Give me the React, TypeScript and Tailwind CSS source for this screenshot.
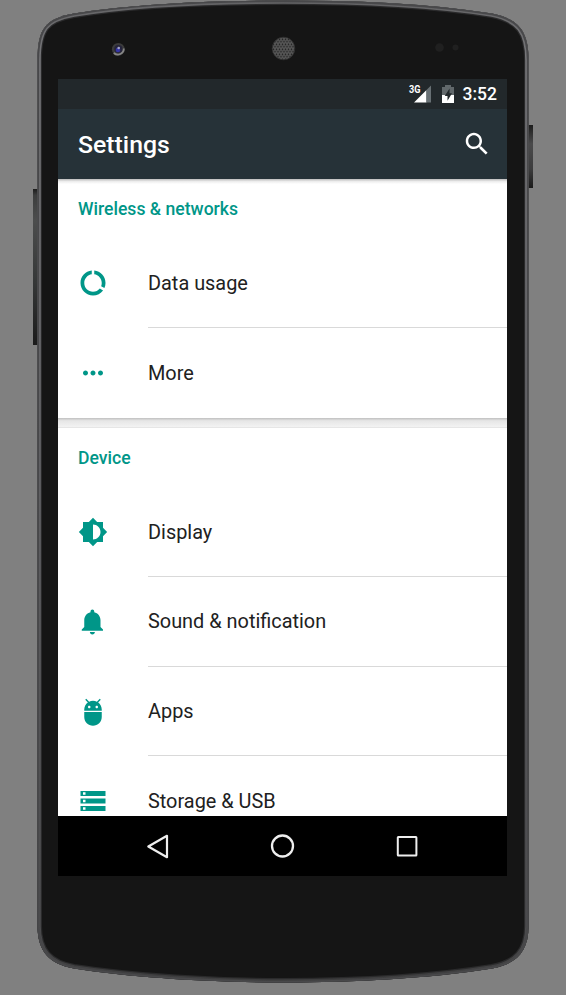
import React from "react";

const BODY =
  "M37.5 60 C37.5 28 46 18.5 74 13.5 C135 3.5 215 0.5 283 0.5 C352 0.5 425 3 492 13.5 C519 19 528.5 32 528.5 60 V926 C528.5 952 516 964 492 968.5 C430 978.5 352 982.5 283 982.5 C215 982.5 135 978 74 968.5 C49 964 37.5 951 37.5 926 Z";

const paths = {
  data: "M13 2.05v3.03c3.39.49 6 3.39 6 6.92 0 .9-.18 1.75-.48 2.54l2.6 1.53c.56-1.24.88-2.62.88-4.07 0-5.18-3.95-9.45-9-9.95zM12 19c-3.87 0-7-3.13-7-7 0-3.53 2.61-6.43 6-6.92V2.05c-5.06.5-9 4.76-9 9.95 0 5.52 4.47 10 9.99 10 3.31 0 6.24-1.61 8.06-4.09l-2.6-1.53C16.17 17.98 14.21 19 12 19z",
  more: "M6 10c-1.1 0-2 .9-2 2s.9 2 2 2 2-.9 2-2-.9-2-2-2zm12 0c-1.1 0-2 .9-2 2s.9 2 2 2 2-.9 2-2-.9-2-2-2zm-6 0c-1.1 0-2 .9-2 2s.9 2 2 2 2-.9 2-2-.9-2-2-2z",
  display: "M20 15.31L23.31 12 20 8.69V4h-4.69L12 .69 8.69 4H4v4.69L.69 12 4 15.31V20h4.69L12 23.31 15.31 20H20v-4.69zM12 18V6c3.31 0 6 2.69 6 6s-2.69 6-6 6z",
  sound: "M11.5 22c1.1 0 2-.9 2-2h-4c0 1.1.9 2 2 2zm6.5-6v-5.5c0-3.07-2.13-5.64-5-6.32V3.5c0-.83-.67-1.5-1.5-1.5S10 2.67 10 3.5v.68c-2.87.68-5 3.25-5 6.32V16l-2 2v1h17v-1l-2-2z",
  apps: "M5 16c0 3.87 3.13 7 7 7s7-3.13 7-7v-4H5v4zM16.12 4.37l2.1-2.1-.82-.83-2.3 2.31C14.16 3.28 13.12 3 12 3s-2.16.28-3.09.75L6.6 1.44l-.82.83 2.1 2.1C6.14 5.64 5 7.68 5 10v1h14v-1c0-2.32-1.14-4.36-2.88-5.63zM9 9c-.55 0-1-.45-1-1s.45-1 1-1 1 .45 1 1-.45 1-1 1zm6 0c-.55 0-1-.45-1-1s.45-1 1-1 1 .45 1 1-.45 1-1 1z",
  storage: "M2 20h20v-4H2v4zm2-3h2v2H4v-2zM2 4v4h20V4H2zm4 3H4V5h2v2zm-4 7h20v-4H2v4zm2-3h2v2H4v-2z",
  search: "M15.5 14h-.79l-.28-.27C15.41 12.59 16 11.11 16 9.5 16 5.91 13.09 3 9.5 3S3 5.91 3 9.5 5.91 16 9.5 16c1.61 0 3.09-.59 4.23-1.57l.27.28v.79l5 4.99L20.49 19l-4.99-5zm-6 0C7.01 14 5 11.99 5 9.5S7.01 5 9.5 5 14 7.01 14 9.5 11.99 14 9.5 14z",
};

function Icon({ name }: { name: keyof typeof paths }) {
  return (
    <svg viewBox="0 0 24 24" className="size-[30px] shrink-0 fill-current">
      <path d={paths[name]} />
    </svg>
  );
}

function Frame() {
  return (
    <svg viewBox="0 0 566 995" className="absolute inset-0 h-[995px] w-[566px]">
      <defs>
        <clipPath id="body">
          <path d={BODY} />
        </clipPath>
        <linearGradient id="keyLeft" x1="0" x2="0" y1="0" y2="1">
          <stop offset="0" stopColor="#1c1c1c" />
          <stop offset="0.04" stopColor="#3c3d3d" />
          <stop offset="0.2" stopColor="#4c4d4d" />
          <stop offset="0.6" stopColor="#353737" />
          <stop offset="1" stopColor="#1b1b1b" />
        </linearGradient>
        <linearGradient id="keyRight" x1="0" x2="0" y1="0" y2="1">
          <stop offset="0" stopColor="#1c1c1c" />
          <stop offset="0.3" stopColor="#4a4a4b" />
          <stop offset="0.7" stopColor="#3c3c3d" />
          <stop offset="1" stopColor="#1a1a1a" />
        </linearGradient>
        <linearGradient id="rim" x1="0" x2="0" y1="0" y2="1">
          <stop offset="0" stopColor="#626264" />
          <stop offset="0.06" stopColor="#77777a" />
          <stop offset="0.5" stopColor="#66666a" />
          <stop offset="0.94" stopColor="#4c4c4e" />
          <stop offset="1" stopColor="#3c3c3d" />
        </linearGradient>
        <pattern id="mesh" width="3" height="5" patternUnits="userSpaceOnUse" x="0.5" y="0.5">
          <rect width="3" height="5" fill="#808080" />
          <rect x="0.4" y="0.3" width="2.2" height="1.9" rx="0.6" fill="#151515" />
          <rect x="-1.1" y="2.8" width="2.2" height="1.9" rx="0.6" fill="#151515" />
          <rect x="1.9" y="2.8" width="2.2" height="1.9" rx="0.6" fill="#151515" />
        </pattern>
      </defs>
      <rect x="33" y="189" width="6" height="156" fill="url(#keyLeft)" />
      <rect x="527" y="125" width="6" height="63" fill="url(#keyRight)" />
      <path d={BODY} fill="#151515" />
      <g clipPath="url(#body)" fill="none">
        <path d={BODY} stroke="#2a2a2b" strokeWidth="9" />
        <path d={BODY} stroke="url(#rim)" strokeWidth="6.6" />
        <path d={BODY} stroke="#48484a" strokeWidth="3.4" />
      </g>
      <circle cx="118.3" cy="49.3" r="6.4" fill="#3c3c3c" />
      <path d="M113.8 53a6 6 0 0 0 10-4.5" fill="none" stroke="#858585" strokeWidth="1.8" />
      <circle cx="118.3" cy="49" r="4.1" fill="#25243b" />
      <circle cx="118" cy="50" r="2.3" fill="#3434a5" />
      <circle cx="118.7" cy="48" r="1.3" fill="#a5a5c8" />
      <circle cx="283.5" cy="48.5" r="11.3" fill="url(#mesh)" stroke="#303030" strokeWidth="0.8" />
      <circle cx="439.5" cy="47.5" r="4.3" fill="#202020" />
      <circle cx="455.5" cy="47.5" r="3" fill="#202020" />
    </svg>
  );
}

function Row({ icon, label, divider }: { icon: keyof typeof paths; label: string; divider?: boolean }) {
  return (
    <div className="flex h-[89.6px] shrink-0 items-stretch pl-5">
      <div className="flex w-[70px] items-center text-[#009688]">
        <Icon name={icon} />
      </div>
      <div className={divider ? "flex flex-1 items-center border-b border-[#d9d9d9]" : "flex flex-1 items-center"}>
        <span className="pt-[2px] text-[19.9px] leading-6 text-[#212121]">{label}</span>
      </div>
    </div>
  );
}

function Category({ label }: { label: string }) {
  return (
    <h2 className="flex h-[59.7px] shrink-0 items-center pt-px pl-5 text-[17.6px] font-medium text-[#009688]">{label}</h2>
  );
}

export default function App() {
  return (
    <div className="relative h-[995px] w-[566px] overflow-hidden bg-[#808080] pt-[79px] pl-[58px] font-[Roboto,sans-serif]">
      <Frame />
      <div className="relative flex h-[797px] w-[449px] flex-col overflow-hidden bg-white">
        <div className="flex h-[30px] shrink-0 items-center justify-end bg-[#22282b] pr-[10px] text-white">
          <svg viewBox="0 0 48 30" className="h-[30px] w-12">
            <path d="M24 23.5 L36.5 11 V23.5Z" fill="#fff" />
            <path d="M36.5 11 L41 6.5 V23.5 H36.5Z" fill="#687074" />
            <text x="19" y="14" textLength="11.5" lengthAdjust="spacingAndGlyphs" className="fill-white text-[10.5px] font-bold">3G</text>
          </svg>
          <svg viewBox="0 0 14 20" className="mr-2 ml-[3px] h-5 w-[14px]">
            <path d="M1 3h3V1h6v2h3v8H1Z" fill="#61686b" />
            <path d="M1 11h12v8H1Z" fill="#fff" />
            <path d="M8.6 4.5 3.7 12h2.8v4.8L11 9.3H8.5Z" fill="#22282b" />
          </svg>
          <span className="pt-px text-[17.5px] font-medium">3:52</span>
        </div>
        <header className="flex h-[70px] shrink-0 items-center justify-between bg-[#263238] pr-[15px] pl-5 text-white">
          <h1 className="pt-px text-[24.8px] font-medium">Settings</h1>
          <Icon name="search" />
        </header>
        <main className="flex min-h-0 flex-1 flex-col overflow-hidden">
          <div className="h-[5px] shrink-0 bg-linear-to-b from-[#bcbcbc] via-[#ededed] to-white" />
          <div className="-mt-[5px] flex shrink-0 flex-col">
            <Category label="Wireless & networks" />
            <Row icon="data" label="Data usage" divider />
            <Row icon="more" label="More" />
          </div>
          <div className="h-[10px] shrink-0 border-b border-[#e6e6e6] bg-linear-to-b from-[#bfbfbf] via-[#e6e6e6] via-30% to-[#f3f3f3]" />
          <Category label="Device" />
          <Row icon="display" label="Display" divider />
          <Row icon="sound" label="Sound & notification" divider />
          <Row icon="apps" label="Apps" divider />
          <Row icon="storage" label="Storage & USB" />
        </main>
        <nav className="flex h-[60px] shrink-0 items-center justify-center gap-[94.5px] bg-black text-[#eee]">
          <svg viewBox="0 0 30 30" className="size-[30px] fill-none stroke-current stroke-[2.2]">
            <path d="M24 4.8V26.2L5.3 15.5Z" strokeLinejoin="round" />
          </svg>
          <svg viewBox="0 0 30 30" className="size-[30px] fill-none stroke-current stroke-[2.3]">
            <circle cx="14.5" cy="15" r="10.5" />
          </svg>
          <svg viewBox="0 0 30 30" className="size-[30px] fill-none stroke-current stroke-2">
            <rect x="5.8" y="6" width="18.6" height="18.6" rx=".5" />
          </svg>
        </nav>
      </div>
    </div>
  );
}
